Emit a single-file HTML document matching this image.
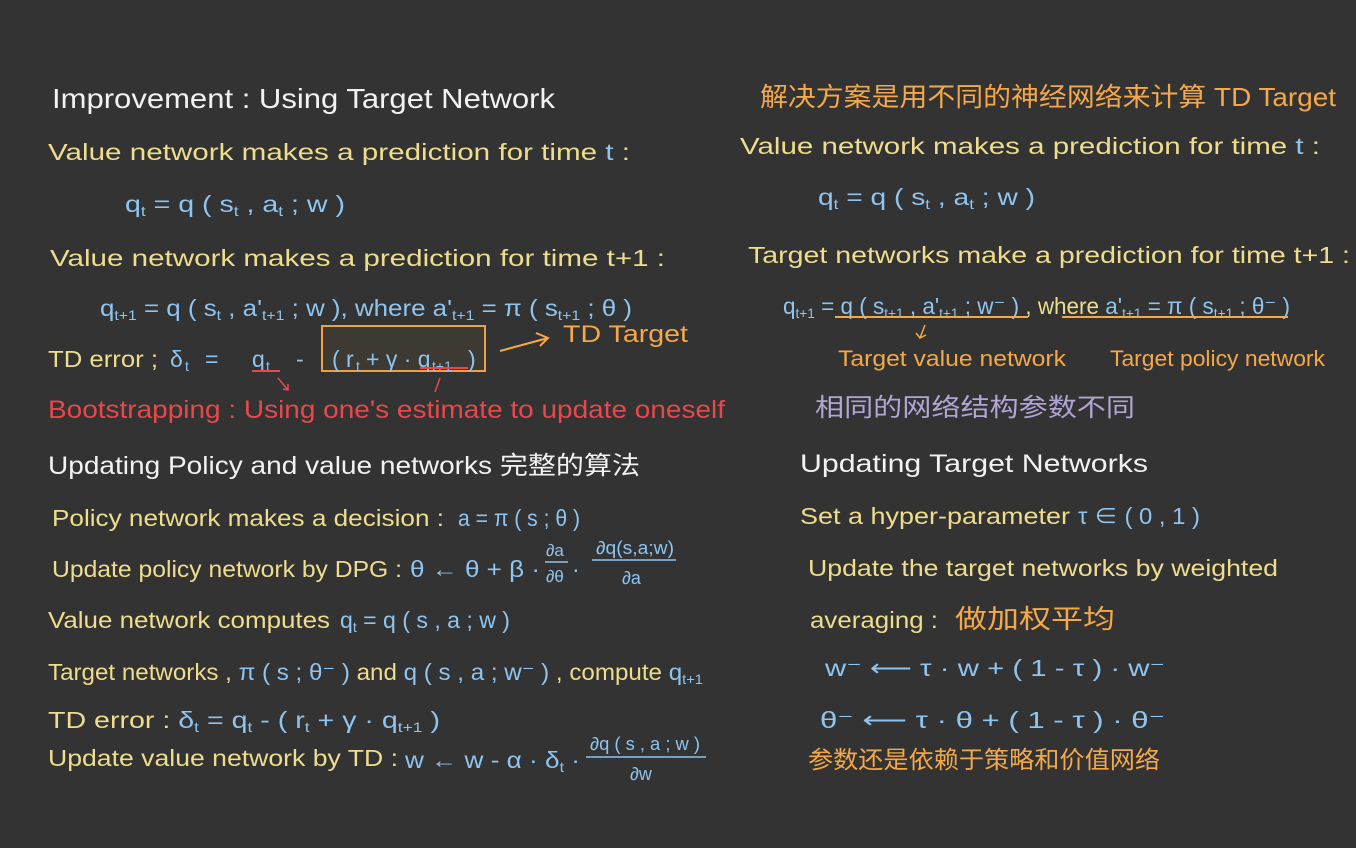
<!DOCTYPE html>
<html><head><meta charset="utf-8"><style>
html,body{margin:0;padding:0;background:#333333;}
svg{display:block}
text{font-family:"Liberation Sans","Noto Sans CJK SC",sans-serif;font-size:23px;}
.w{fill:#f2f2f2}.y{fill:#eedd8c}.b{fill:#8ec4f0}.o{fill:#f4a84a}.r{fill:#e8484a}.p{fill:#b4a4d4}
</style></head><body>
<svg width="1356" height="848" viewBox="0 0 1356 848" xmlns="http://www.w3.org/2000/svg">
<rect width="1356" height="848" fill="#333333"/>
<!-- Left column -->
<text x="52" y="108" class="w" style="font-size:28px" textLength="503" lengthAdjust="spacingAndGlyphs">Improvement : Using Target Network</text>
<text x="48" y="160" class="y" textLength="582" lengthAdjust="spacingAndGlyphs">Value network makes a prediction for time <tspan class="b">t</tspan> :</text>
<text x="125" y="212" class="b" textLength="220" lengthAdjust="spacingAndGlyphs">q<tspan font-size="14" dy="4">t</tspan><tspan dy="-4"> = q ( s</tspan><tspan font-size="14" dy="4">t</tspan><tspan dy="-4"> , a</tspan><tspan font-size="14" dy="4">t</tspan><tspan dy="-4"> ; w )</tspan></text>
<text x="50" y="266" class="y" textLength="615" lengthAdjust="spacingAndGlyphs">Value network makes a prediction for time t+1 :</text>
<text x="100" y="316" class="b" textLength="532" lengthAdjust="spacingAndGlyphs">q<tspan font-size="14" dy="4">t+1</tspan><tspan dy="-4"> = q ( s</tspan><tspan font-size="14" dy="4">t</tspan><tspan dy="-4"> , a'</tspan><tspan font-size="14" dy="4">t+1</tspan><tspan dy="-4"> ; w ), where a'</tspan><tspan font-size="14" dy="4">t+1</tspan><tspan dy="-4"> = π ( s</tspan><tspan font-size="14" dy="4">t+1</tspan><tspan dy="-4"> ; θ )</tspan></text>
<rect x="322" y="326" width="163" height="45" fill="#3d3a33" stroke="#f0a040" stroke-width="2"/>
<text x="48" y="367" class="y" textLength="110" lengthAdjust="spacingAndGlyphs">TD error ;</text>
<text x="170" y="367" class="b">δ</text>
<text x="185" y="371" class="b" style="font-size:14px">t</text>
<text x="205" y="367" class="b">=</text>
<text x="252" y="367" class="b">q</text>
<text x="266" y="371" class="b" style="font-size:14px">t</text>
<text x="296" y="367" class="b">-</text>
<text x="332" y="367" class="b">( r</text>
<text x="356" y="371" class="b" style="font-size:14px">t</text>
<text x="366" y="367" class="b">+ γ · q</text>
<text x="432" y="371" class="b" style="font-size:14px">t+1</text>
<text x="468" y="367" class="b">)</text>
<line x1="252" y1="371" x2="280" y2="371" stroke="#e8484a" stroke-width="2"/>
<line x1="420" y1="368" x2="468" y2="368" stroke="#e8484a" stroke-width="2"/>
<path d="M278 378 L288 390 M283 389 L288 390 L288 384" stroke="#e8484a" stroke-width="1.5" fill="none"/>
<path d="M440 378 L435 392" stroke="#e8484a" stroke-width="1.5" fill="none"/>
<path d="M500 351 L548 338 M536 333 L548 338 L540 346" stroke="#f4a84a" stroke-width="2" fill="none"/>
<text x="563" y="342" class="o" style="font-size:24px" textLength="125" lengthAdjust="spacingAndGlyphs">TD Target</text>
<text x="48" y="418" class="r" style="font-size:25px" textLength="677" lengthAdjust="spacingAndGlyphs">Bootstrapping : Using one's estimate to update oneself</text>
<text x="48" y="474" class="w" style="font-size:25px" textLength="592" lengthAdjust="spacingAndGlyphs">Updating Policy and value networks 完整的算法</text>
<text x="52" y="526" class="y" textLength="392" lengthAdjust="spacingAndGlyphs">Policy network makes a decision :</text>
<text x="458" y="526" class="b" textLength="122" lengthAdjust="spacingAndGlyphs">a = π ( s ; θ )</text>
<text x="52" y="577" class="y" textLength="350" lengthAdjust="spacingAndGlyphs">Update policy network by DPG :</text>
<text x="410" y="577" class="b" textLength="130" lengthAdjust="spacingAndGlyphs">θ ← θ + β ·</text>
<text x="546" y="556" class="b" style="font-size:17px">∂a</text>
<line x1="545" y1="562" x2="568" y2="562" stroke="#8ec4f0" stroke-width="1.5"/>
<text x="546" y="582" class="b" style="font-size:17px">∂θ</text>
<text x="572" y="577" class="b">·</text>
<text x="596" y="554" class="b" style="font-size:18px" textLength="78" lengthAdjust="spacingAndGlyphs">∂q(s,a;w)</text>
<line x1="592" y1="560" x2="676" y2="560" stroke="#8ec4f0" stroke-width="1.5"/>
<text x="622" y="584" class="b" style="font-size:18px">∂a</text>
<text x="48" y="628" class="y" textLength="282" lengthAdjust="spacingAndGlyphs">Value network computes</text>
<text x="340" y="628" class="b" textLength="170" lengthAdjust="spacingAndGlyphs">q<tspan font-size="14" dy="4">t</tspan><tspan dy="-4"> = q ( s , a ; w )</tspan></text>
<text x="48" y="680" class="y" textLength="655" lengthAdjust="spacingAndGlyphs">Target networks , <tspan class="b">π ( s ; θ⁻ )</tspan> and <tspan class="b">q ( s , a ; w⁻ )</tspan> , compute <tspan class="b">q</tspan><tspan class="b" font-size="14" dy="4">t+1</tspan></text>
<text x="48" y="728" class="y" textLength="392" lengthAdjust="spacingAndGlyphs">TD error : <tspan class="b">δ</tspan><tspan class="b" font-size="14" dy="4">t</tspan><tspan class="b" dy="-4"> = q</tspan><tspan class="b" font-size="14" dy="4">t</tspan><tspan class="b" dy="-4"> - ( r</tspan><tspan class="b" font-size="14" dy="4">t</tspan><tspan class="b" dy="-4"> + γ · q</tspan><tspan class="b" font-size="14" dy="4">t+1</tspan><tspan class="b" dy="-4"> )</tspan></text>
<text x="48" y="766" class="y" textLength="350" lengthAdjust="spacingAndGlyphs">Update value network by TD :</text>
<text x="405" y="768" class="b" textLength="175" lengthAdjust="spacingAndGlyphs">w ← w - α · δ<tspan font-size="14" dy="4">t</tspan><tspan dy="-4"> ·</tspan></text>
<text x="590" y="750" class="b" style="font-size:18px" textLength="110" lengthAdjust="spacingAndGlyphs">∂q ( s , a ; w )</text>
<line x1="586" y1="757" x2="706" y2="757" stroke="#8ec4f0" stroke-width="1.5"/>
<text x="630" y="780" class="b" style="font-size:18px">∂w</text>
<!-- Right column -->
<text x="760" y="106" class="o" style="font-size:26px" textLength="576" lengthAdjust="spacingAndGlyphs">解决方案是用不同的神经网络来计算 TD Target</text>
<text x="740" y="154" class="y" textLength="580" lengthAdjust="spacingAndGlyphs">Value network makes a prediction for time <tspan class="b">t</tspan> :</text>
<text x="818" y="205" class="b" textLength="217" lengthAdjust="spacingAndGlyphs">q<tspan font-size="14" dy="4">t</tspan><tspan dy="-4"> = q ( s</tspan><tspan font-size="14" dy="4">t</tspan><tspan dy="-4"> , a</tspan><tspan font-size="14" dy="4">t</tspan><tspan dy="-4"> ; w )</tspan></text>
<text x="748" y="263" class="y" textLength="602" lengthAdjust="spacingAndGlyphs">Target networks make a prediction for time t+1 :</text>
<text x="783" y="314" class="b" textLength="507" lengthAdjust="spacingAndGlyphs">q<tspan font-size="14" dy="4">t+1</tspan><tspan dy="-4"> = q ( s</tspan><tspan font-size="14" dy="4">t+1</tspan><tspan dy="-4"> , a'</tspan><tspan font-size="14" dy="4">t+1</tspan><tspan dy="-4"> ; w⁻ ) </tspan><tspan class="y">, where</tspan><tspan> a'</tspan><tspan font-size="14" dy="4">t+1</tspan><tspan dy="-4"> = π ( s</tspan><tspan font-size="14" dy="4">t+1</tspan><tspan dy="-4"> ; θ⁻ )</tspan></text>
<line x1="835" y1="317" x2="1028" y2="317" stroke="#f4a84a" stroke-width="2"/>
<line x1="1062" y1="317" x2="1288" y2="317" stroke="#f4a84a" stroke-width="2"/>
<path d="M925 325 L920 338 M916 333 L920 338 L926 335" stroke="#f4a84a" stroke-width="1.5" fill="none"/>
<text x="838" y="366" class="o" style="font-size:22px" textLength="228" lengthAdjust="spacingAndGlyphs">Target value network</text>
<text x="1110" y="366" class="o" style="font-size:22px" textLength="215" lengthAdjust="spacingAndGlyphs">Target policy network</text>
<text x="815" y="416" class="p" style="font-size:25px" textLength="320" lengthAdjust="spacingAndGlyphs">相同的网络结构参数不同</text>
<text x="800" y="472" class="w" style="font-size:25px" textLength="348" lengthAdjust="spacingAndGlyphs">Updating Target Networks</text>
<text x="800" y="524" class="y" textLength="270" lengthAdjust="spacingAndGlyphs">Set a hyper-parameter</text>
<text x="1078" y="524" class="b" textLength="122" lengthAdjust="spacingAndGlyphs">τ ∈ ( 0 , 1 )</text>
<text x="808" y="576" class="y" textLength="470" lengthAdjust="spacingAndGlyphs">Update the target networks by weighted</text>
<text x="810" y="628" class="y" textLength="128" lengthAdjust="spacingAndGlyphs">averaging :</text>
<text x="955" y="628" class="o" style="font-size:26px" textLength="160" lengthAdjust="spacingAndGlyphs">做加权平均</text>
<text x="825" y="676" class="b" textLength="340" lengthAdjust="spacingAndGlyphs">w⁻ ⟵ τ · w + ( 1 - τ ) · w⁻</text>
<text x="820" y="728" class="b" textLength="345" lengthAdjust="spacingAndGlyphs">θ⁻ ⟵ τ · θ + ( 1 - τ ) · θ⁻</text>
<text x="808" y="768" class="o" style="font-size:24px" textLength="352" lengthAdjust="spacingAndGlyphs">参数还是依赖于策略和价值网络</text>
</svg>
</body></html>
